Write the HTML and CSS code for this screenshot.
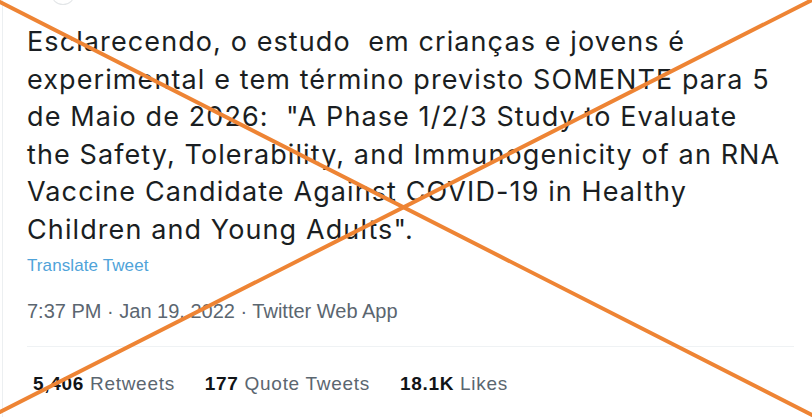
FILE: index.html
```html
<!DOCTYPE html>
<html lang="pt">
<head>
<meta charset="utf-8">
<link rel="stylesheet" href="styles.css">
</head>
<body>
<div class="card">
  <div class="avatar"></div>
  <div class="content">
    <p class="tweet-text">Esclarecendo, o estudo&nbsp; em crianças e jovens é<br>experimental e tem término previsto SOMENTE para 5<br>de Maio de 2026:&nbsp; "A Phase 1/2/3 Study to Evaluate<br>the Safety, Tolerability, and Immunogenicity of an RNA<br>Vaccine Candidate Against COVID-19 in Healthy<br>Children and Young Adults".</p>
    <a class="translate">Translate Tweet</a>
    <div class="meta">7:37 PM · Jan 19, 2022 · Twitter Web App</div>
    <div class="divider"></div>
    <div class="stats">
      <span class="stat"><b>5,406</b> Retweets</span>
      <span class="stat"><b>177</b> Quote Tweets</span>
      <span class="stat"><b>18.1K</b> Likes</span>
    </div>
  </div>
</div>
<svg class="cross" width="812" height="417" viewBox="0 0 812 417">
  <line x1="0" y1="2" x2="812" y2="415" />
  <line x1="0" y1="412" x2="812" y2="0" />
</svg>
</body>
</html>
```
FILE: styles.css
```css
html, body {
  margin: 0;
  padding: 0;
  background: #ffffff;
  width: 812px;
  height: 417px;
  overflow: hidden;
}
body {
  position: relative;
  font-family: "Liberation Sans", Arial, sans-serif;
}
.card {
  height: 417px;
  border-left: 1px solid #eceff1;
  margin-left: 2px;
  position: relative;
}
.avatar {
  position: absolute;
  left: 48px;
  top: -18px;
  width: 22px;
  height: 21px;
  border-radius: 50%;
  border: 1px solid #e3e6e8;
}
.content {
  padding: 23px 0 0 24px;
}
.tweet-text {
  margin: 0;
  font-family: Inter, "Liberation Sans", sans-serif;
  font-size: 27px;
  line-height: 37.6px;
  color: #1a1e22;
  letter-spacing: 1.1px;
  white-space: nowrap;
}
.translate {
  display: block;
  margin-top: 7px;
  font-size: 17px;
  line-height: 20px;
  letter-spacing: 0.1px;
  color: #4fa3d9;
}
.meta {
  margin-top: 23px;
  font-size: 20px;
  line-height: 24px;
  color: #5b6670;
}
.divider {
  margin-top: 23px;
  height: 1px;
  background: #eff2f4;
  width: 767px;
}
.stats {
  display: flex;
  gap: 30px;
  padding-left: 6px;
  margin-top: 25px;
  font-size: 19px;
  line-height: 24px;
  letter-spacing: 0.7px;
  color: #5b6670;
}
.stats b {
  color: #111417;
}
.cross {
  position: absolute;
  left: 0;
  top: 0;
}
.cross line {
  stroke: #ee8434;
  stroke-width: 4;
  stroke-linecap: round;
}
```
